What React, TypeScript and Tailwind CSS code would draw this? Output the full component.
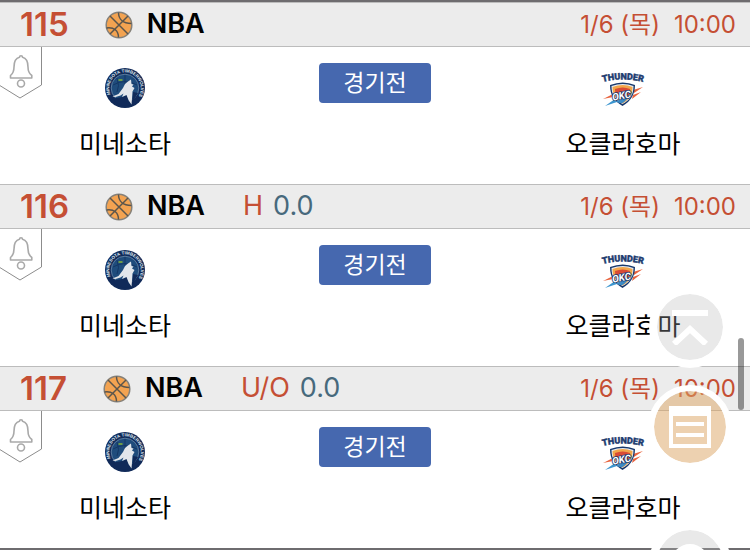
import { clsx } from 'clsx';

type Game = {
    no: number;
    league: string;
    type?: string;
    line?: string;
    date: string;
    time: string;
    home: string;
    away: string;
};

const games: Game[] = [
    { no: 115, league: 'NBA', date: '1/6 (목)', time: '10:00', home: '미네소타', away: '오클라호마' },
    { no: 116, league: 'NBA', type: 'H', line: '0.0', date: '1/6 (목)', time: '10:00', home: '미네소타', away: '오클라호마' },
    { no: 117, league: 'NBA', type: 'U/O', line: '0.0', date: '1/6 (목)', time: '10:00', home: '미네소타', away: '오클라호마' },
];

const BasketballIcon = () => (
    <svg className="size-7 shrink-0" viewBox="0 0 28 28" fill="none" stroke="#5b554c" strokeWidth="1.5">
        <circle cx="14" cy="14" r="12.800" fill="#f3a351" stroke="#85817a" />
        <path d="M5 23 23 5M5 5l18 18" />
        <path d="M13.500 1.500C13.500 8 18 12.500 26.500 12.500M1.500 17C9 16 13.500 19.500 13.500 26.500" />
    </svg>
);

const BellTag = () => (
    <svg className="h-[52px] w-[42px]" viewBox="0 0 42 52" fill="none">
        <path d="M-1 38 20 51 41.500 38V0" stroke="#8c8c8c" />
        <g stroke="#a9a9a9" strokeWidth="1.600" strokeLinejoin="round">
            <path d="M10.500 31v-2.500c2.500-2 3.500-4.500 3.500-8.500 0-5.500 2-9 5.500-9.800 0-2 3-2 3 0 3.500.8 5.500 4.300 5.500 9.800 0 4 1 6.500 3.800 8.500V31z" />
            <circle cx="21" cy="36.500" r="3.500" />
        </g>
    </svg>
);

const WolvesLogo = () => (
    <svg className="size-10" viewBox="0 0 40 40">
        <defs>
            <path id="wolvesRing" d="M5.500 26.500A15.800 15.800 0 1 1 31 31.500" />
        </defs>
        <circle cx="20" cy="20" r="20" fill="#102a59" />
        <circle cx="20" cy="20" r="13.800" fill="#1f4c7c" stroke="#86a2bd" strokeWidth=".6" />
        <path d="M8 17q12-7 24 0M20 7v10M12 10q3 8 0 14" fill="none" stroke="#143765" />
        <path d="M7 30q8 1 15-3l3 10q-12 2-18-7zM28 24l5 1-6 10z" fill="#102a59" />
        <text fontFamily="Liberation Sans" fontSize="4.500" fontWeight="700" fill="#dfe6ee">
            <textPath href="#wolvesRing">MINNESOTA TIMBERWOLVES</textPath>
        </text>
        <path
            d="M26 11.500l-3 2-3 2.500-2 4-4.500 6-6 2.500 3 .500 5-1.500 3-2-1.500 3.500 4.500-2 2 5 3 4.500.500-6 .5-7 2-3.500-2.500-1.500 1.500-2-2-.500z"
            fill="#e2e6eb"
        />
        <path d="M13.500 12h4" stroke="#7fb03a" strokeWidth="1.600" />
    </svg>
);

const ThunderLogo = () => (
    <svg className="h-10 w-[42px] overflow-visible" viewBox="0 0 42 40">
        <defs>
            <path id="thunderArc" d="M-3 15Q21 8 45 15" />
        </defs>
        <path d="M1 31 11 26v3zM31 22l10-3-9 6zM31 27l8-3-9 7z" fill="#e8643f" />
        <path d="M3 38l10-7 2 3z" fill="#3c95cf" />
        <path d="M8 17q13-5 25 0c0 9-4 16-12.500 21C12 33 8 27 8 17z" fill="#17386c" />
        <path d="M9.500 18q11.500-4 22 0c0 9-3.500 14-11 18C13 32 9.500 27 9.500 18z" fill="#e9edf2" />
        <path d="M10.500 19q10.500-4 20 0c0 8-3 12.500-10 16.500C14 31.500 10.500 27 10.500 19z" fill="#f2a64a" />
        <path d="M13 21q8-3 15 0c0 6-2.500 9.500-7.500 12.500C16 30 13 27 13 21z" fill="#d94b35" />
        <path d="M14 33.500l14-7c-2 4-4.500 6.500-7.500 8.500-3 0-5-.5-6.500-1.500z" fill="#3c8ac4" />
        <text
            x="10"
            y="31"
            fontFamily="Roboto"
            fontSize="10"
            fontWeight="700"
            fontStyle="italic"
            fill="#fff"
            stroke="#17386c"
            strokeWidth="1.500"
            paintOrder="stroke"
            transform="rotate(-10 20 28)"
        >
            OKC
        </text>
        <text
            fontFamily="Roboto"
            fontSize="9"
            fontWeight="900"
            fill="#1e3c70"
            stroke="#1e3c70"
            strokeWidth=".4"
            textAnchor="middle"
        >
            <textPath href="#thunderArc" startOffset="50%">
                THUNDER
            </textPath>
        </text>
    </svg>
);

const GameHeader = ({ game }: { game: Game }) => (
    <div className="flex h-[45px] items-center justify-between border-y border-[#bcbcbc] bg-[#ececec] pr-[14px] pl-5">
        <div className="flex items-center">
            <span className="text-[33px] font-semibold text-[#c54f34]">{game.no}</span>
            <span className="ml-9 flex items-center gap-[14px]">
                <BasketballIcon />
                <span className="text-[27px] font-semibold text-black">{game.league}</span>
            </span>
            {game.type && (
                <span className="ml-[38px] flex gap-[10px] text-[27px]">
                    <span className="text-[#c54f34]">{game.type}</span>
                    <span className="text-[#47697c]">{game.line}</span>
                </span>
            )}
        </div>
        <div className="flex gap-[14px] text-2xl text-[#c54f34]">
            <span>{game.date}</span>
            <span>{game.time}</span>
        </div>
    </div>
);

const GameRow = ({ game }: { game: Game }) => (
    <article>
        <GameHeader game={game} />
        <div className="relative grid h-[137px] grid-cols-3 text-[25px] text-black">
            <button type="button" aria-label="알림" className="absolute top-0 left-0">
                <BellTag />
            </button>
            <div className="flex flex-col items-center gap-[18px] pt-[21px]">
                <WolvesLogo />
                <span>{game.home}</span>
            </div>
            <div className="flex justify-center pt-4">
                <button type="button" className="h-10 w-28 rounded bg-[#4668af] text-[23px] leading-none text-white">
                    경기전
                </button>
            </div>
            <div className="flex flex-col items-center gap-[18px] pt-[21px] pr-1">
                <ThunderLogo />
                <span>{game.away}</span>
            </div>
        </div>
    </article>
);

const FloatButton = ({ label, className, children }: { label: string; className: string; children: React.ReactNode }) => (
    <button
        type="button"
        aria-label={label}
        className={clsx('flex shrink-0 items-center justify-center rounded-full border-white bg-clip-padding', className)}
    >
        {children}
    </button>
);

const App = () => (
    <div className="relative min-h-screen overflow-hidden bg-white font-['Inter','Noto_Sans_CJK_KR',sans-serif]">
        <main className="border-y-2 border-[#6e6c6f]">
            {games.map((game) => (
                <GameRow key={game.no} game={game} />
            ))}
        </main>

        <div className="absolute top-[286px] right-[18px] flex flex-col items-center">
            <FloatButton label="맨 위로" className="size-[82px] border-8 bg-[#b6b6b6]/30">
                <svg className="size-9" viewBox="0 0 36 36" fill="none" stroke="#fff" strokeWidth="6">
                    <path d="M0 4h36M2 35 18 20l16 15" />
                </svg>
            </FloatButton>
            <FloatButton label="목록" className="mt-[17px] size-[84px] border-6 bg-[#dba461]/50">
                <svg className="size-[42px]" viewBox="0 0 42 42" fill="none" stroke="#fff">
                    <path d="M0 5h42" strokeWidth="10" />
                    <path d="M2 2h38v38H2z" strokeWidth="4" />
                    <path d="M7 18h28M7 29h28" strokeWidth="4" />
                </svg>
            </FloatButton>
            <FloatButton label="새로고침" className="mt-[53px] size-[82px] border-8 bg-[#b6b6b6]/30">
                <svg className="size-10" viewBox="0 0 40 40" fill="none" stroke="#fff" strokeWidth="6">
                    <circle cx="20" cy="20" r="16" />
                </svg>
            </FloatButton>
        </div>
        <div className="absolute top-[338px] right-[6px] h-[72px] w-[6px] rounded-full bg-black/40" />
    </div>
);

export default App;
